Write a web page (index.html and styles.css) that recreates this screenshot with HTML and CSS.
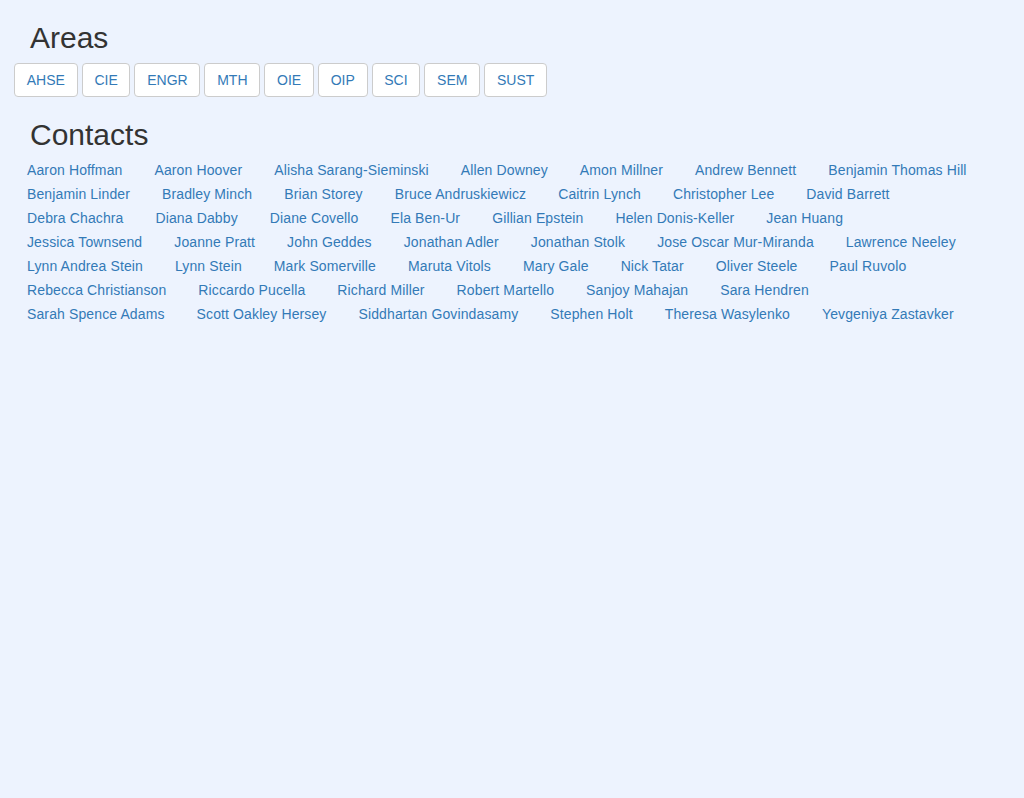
FILE: index.html
```html
<!DOCTYPE html>
<html>
<head>
<meta charset="utf-8">
<link rel="stylesheet" href="styles.css">
</head>
<body>
<div class="page">
  <h2 class="title">Areas</h2>
  <div class="areas">
    <button class="btn">AHSE</button>
    <button class="btn">CIE</button>
    <button class="btn">ENGR</button>
    <button class="btn">MTH</button>
    <button class="btn">OIE</button>
    <button class="btn">OIP</button>
    <button class="btn">SCI</button>
    <button class="btn">SEM</button>
    <button class="btn">SUST</button>
  </div>
  <h2 class="title contacts-title">Contacts</h2>
  <div class="contacts">
    <a href="#">Aaron Hoffman</a>
    <a href="#">Aaron Hoover</a>
    <a href="#">Alisha Sarang-Sieminski</a>
    <a href="#">Allen Downey</a>
    <a href="#">Amon Millner</a>
    <a href="#">Andrew Bennett</a>
    <a href="#">Benjamin Thomas Hill</a>
    <a href="#">Benjamin Linder</a>
    <a href="#">Bradley Minch</a>
    <a href="#">Brian Storey</a>
    <a href="#">Bruce Andruskiewicz</a>
    <a href="#">Caitrin Lynch</a>
    <a href="#">Christopher Lee</a>
    <a href="#">David Barrett</a>
    <a href="#">Debra Chachra</a>
    <a href="#">Diana Dabby</a>
    <a href="#">Diane Covello</a>
    <a href="#">Ela Ben-Ur</a>
    <a href="#">Gillian Epstein</a>
    <a href="#">Helen Donis-Keller</a>
    <a href="#">Jean Huang</a>
    <a href="#">Jessica Townsend</a>
    <a href="#">Joanne Pratt</a>
    <a href="#">John Geddes</a>
    <a href="#">Jonathan Adler</a>
    <a href="#">Jonathan Stolk</a>
    <a href="#">Jose Oscar Mur-Miranda</a>
    <a href="#">Lawrence Neeley</a>
    <a href="#">Lynn Andrea Stein</a>
    <a href="#">Lynn Stein</a>
    <a href="#">Mark Somerville</a>
    <a href="#">Maruta Vitols</a>
    <a href="#">Mary Gale</a>
    <a href="#">Nick Tatar</a>
    <a href="#">Oliver Steele</a>
    <a href="#">Paul Ruvolo</a>
    <a href="#">Rebecca Christianson</a>
    <a href="#">Riccardo Pucella</a>
    <a href="#">Richard Miller</a>
    <a href="#">Robert Martello</a>
    <a href="#">Sanjoy Mahajan</a>
    <a href="#">Sara Hendren</a>
    <a href="#">Sarah Spence Adams</a>
    <a href="#">Scott Oakley Hersey</a>
    <a href="#">Siddhartan Govindasamy</a>
    <a href="#">Stephen Holt</a>
    <a href="#">Theresa Wasylenko</a>
    <a href="#">Yevgeniya Zastavker</a>
  </div>
</div>
</body>
</html>
```

FILE: styles.css
```css
html, body {
  margin: 0;
  padding: 0;
  background: #edf3fe;
  font-family: "Liberation Sans", Arial, sans-serif;
  font-size: 14px;
  color: #333;
}

.page {
  padding: 21px 14px 0 14px;
}

.title {
  margin: 0 0 9px 16px;
  font-size: 30px;
  font-weight: 400;
  line-height: 33px;
  color: #333;
}

.contacts-title {
  margin-top: 21px;
  margin-bottom: 7px;
}

.areas {
  display: flex;
  gap: 4px;
}

.btn {
  font-family: inherit;
  font-size: 14px;
  line-height: 20px;
  height: 34px;
  padding: 6px 11.75px;
  background: #fff;
  color: #337ab7;
  border: 1px solid #ccc;
  border-radius: 4px;
}

.contacts {
  display: flex;
  flex-wrap: wrap;
  column-gap: 32px;
  width: 950px;
  padding-left: 13px;
}

.contacts a {
  color: #337ab7;
  text-decoration: none;
  line-height: 24px;
  letter-spacing: 0.12px;
}
```
